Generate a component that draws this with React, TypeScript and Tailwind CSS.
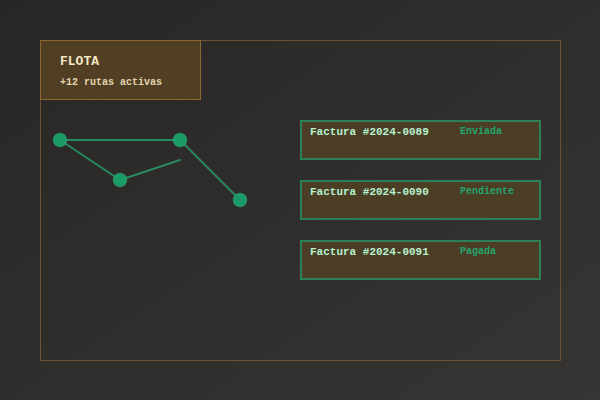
const invoices = [
  { id: '#2024-0089', status: 'Enviada' },
  { id: '#2024-0090', status: 'Pendiente' },
  { id: '#2024-0091', status: 'Pagada' },
];

function RouteGraph() {
  // nodes relative to the svg box (page x - 41, page y - 100)
  const nodes = [
    [19, 40],
    [79, 80],
    [139, 40],
    [199, 100],
  ];
  return (
    <svg width="259" height="120" viewBox="0 0 259 120" className="shrink-0">
      <g stroke="#268a5f" strokeWidth="2" strokeLinecap="round" fill="none">
        <line x1="19" y1="40" x2="139" y2="40" />
        <line x1="19" y1="40" x2="79" y2="80" />
        <line x1="79" y1="80" x2="139" y2="60" />
        <line x1="139" y1="40" x2="199" y2="100" />
      </g>
      {nodes.map(([x, y]) => (
        <circle key={`${x}-${y}`} cx={x} cy={y} r="6.5" fill="#1a9a66" stroke="#2bb07a" strokeOpacity="0.6" strokeWidth="1.5" />
      ))}
    </svg>
  );
}

export default function App() {
  return (
    <div
      className="w-[600px] h-[400px] pt-10 pl-10 pr-[39px] pb-[39px] bg-gradient-to-br from-[#292725] to-[#373533]"
      style={{ fontFamily: '"Liberation Mono", "Courier New", monospace' }}
    >
      <div className="h-full border border-[#6e522f] flex flex-col">
        <div className="-mt-px -ml-px w-[161px] h-[60px] bg-[#513f25] border border-[#8a6830] pl-[19px] pt-[13px]">
          <div className="text-[13px] font-bold leading-4 text-[#f4e7c3]">FLOTA</div>
          <div className="mt-[7px] text-[10px] font-bold leading-3 text-[#e6d6ae]">+12 rutas activas</div>
        </div>
        <div className="flex">
          <RouteGraph />
          <div className="mt-5 flex flex-col gap-5">
            {invoices.map((inv) => (
              <div
                key={inv.id}
                className="w-[241px] h-[40px] bg-[#4c3d25] border-2 border-[#2c8159] flex items-start pl-[8px] pt-[2px]"
              >
                <span className="w-[150px] text-[11px] font-bold leading-4 text-[#b6f2d0]">Factura {inv.id}</span>
                <span className="text-[10px] font-bold leading-4 text-[#22a56d]">{inv.status}</span>
              </div>
            ))}
          </div>
        </div>
      </div>
    </div>
  );
}
